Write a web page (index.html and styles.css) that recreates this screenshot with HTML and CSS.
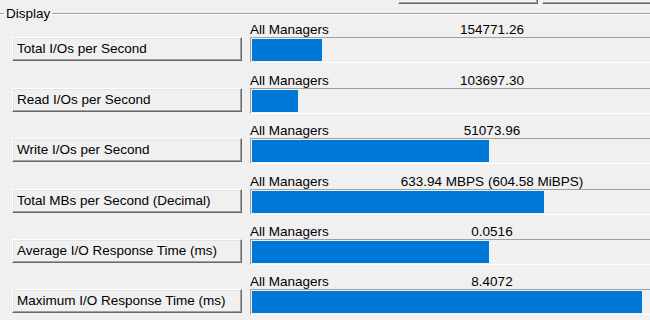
FILE: index.html
```html
<!DOCTYPE html>
<html lang="en">
<head>
  <meta charset="UTF-8" />
  <meta name="viewport" content="width=device-width, initial-scale=1.0"/>
  <title>Display</title>
  <link rel="stylesheet" href="styles.css">
</head>
<body>
  <div class="window">
    <div class="toolbar">
      <button class="win-btn top-btn"></button>
      <button class="win-btn top-btn wide"></button>
    </div>

    <fieldset class="display">
      <legend>Display</legend>

      <div class="row">
        <button class="win-btn metric">Total I/Os per Second</button>
        <div class="meter">
          <div class="meter-label"><span>All Managers</span><span class="value">154771.26</span><span></span></div>
          <div class="bar"><div class="fill" style="width: 70px"></div></div>
        </div>
      </div>

      <div class="row">
        <button class="win-btn metric">Read I/Os per Second</button>
        <div class="meter">
          <div class="meter-label"><span>All Managers</span><span class="value">103697.30</span><span></span></div>
          <div class="bar"><div class="fill" style="width: 46px"></div></div>
        </div>
      </div>

      <div class="row">
        <button class="win-btn metric">Write I/Os per Second</button>
        <div class="meter">
          <div class="meter-label"><span>All Managers</span><span class="value">51073.96</span><span></span></div>
          <div class="bar"><div class="fill" style="width: 237px"></div></div>
        </div>
      </div>

      <div class="row">
        <button class="win-btn metric">Total MBs per Second (Decimal)</button>
        <div class="meter">
          <div class="meter-label"><span>All Managers</span><span class="value">633.94 MBPS (604.58 MiBPS)</span><span></span></div>
          <div class="bar"><div class="fill" style="width: 292px"></div></div>
        </div>
      </div>

      <div class="row">
        <button class="win-btn metric">Average I/O Response Time (ms)</button>
        <div class="meter">
          <div class="meter-label"><span>All Managers</span><span class="value">0.0516</span><span></span></div>
          <div class="bar"><div class="fill" style="width: 237px"></div></div>
        </div>
      </div>

      <div class="row">
        <button class="win-btn metric">Maximum I/O Response Time (ms)</button>
        <div class="meter">
          <div class="meter-label"><span>All Managers</span><span class="value">8.4072</span><span></span></div>
          <div class="bar"><div class="fill" style="width: 390px"></div></div>
        </div>
      </div>
    </fieldset>
  </div>
</body>
</html>
```

FILE: styles.css
```css
html, body {
  margin: 0;
  height: 100%;
  overflow: hidden;
}
body {
  background: #f0f0f0;
  color: #000;
  font-family: "Liberation Sans", Arial, sans-serif;
  font-size: 13.5px;
  line-height: 15px;
}
.window {
  width: 650px;
  height: 320px;
  overflow: hidden;
}
.win-btn {
  display: block;
  box-sizing: border-box;
  height: 24px;
  margin: 0;
  padding: 0 0 1px 4px;
  background: #f0f0f0;
  font: inherit;
  text-align: left;
  color: #000;
  border: 1px solid;
  border-color: #fff #696969 #696969 #fff;
  box-shadow: inset -1px -1px #a0a0a0, inset 1px 1px #e3e3e3;
}
.toolbar {
  display: flex;
  gap: 4px;
  height: 4px;
  padding-left: 398px;
}
.top-btn {
  flex: none;
  width: 140px;
  margin-top: -20px;
}
.top-btn.wide {
  width: 200px;
}
.display {
  margin: 2px 0 0 -6px;
  padding: 0 0 0 9px;
  width: 900px;
  border: 1px solid #a0a0a0;
  box-shadow: inset 1px 1px #fff;
}
.display legend {
  padding: 0 2px;
}
.row {
  display: flex;
  align-items: flex-end;
  gap: 8px;
  height: 50.4px;
  margin-left: 8px;
}
.metric {
  flex: none;
  width: 230px;
  margin-bottom: 10px;
}
.meter {
  flex: none;
  width: 484px;
  margin-bottom: 8px;
}
.meter-label {
  display: grid;
  grid-template-columns: 1fr auto 1fr;
  height: 15px;
}
.bar {
  box-sizing: border-box;
  height: 26px;
  padding: 1px;
  border: 1px solid;
  border-color: #a0a0a0 #fff #fff #a0a0a0;
}
.fill {
  height: 22px;
  background: #0078d7;
}
```
